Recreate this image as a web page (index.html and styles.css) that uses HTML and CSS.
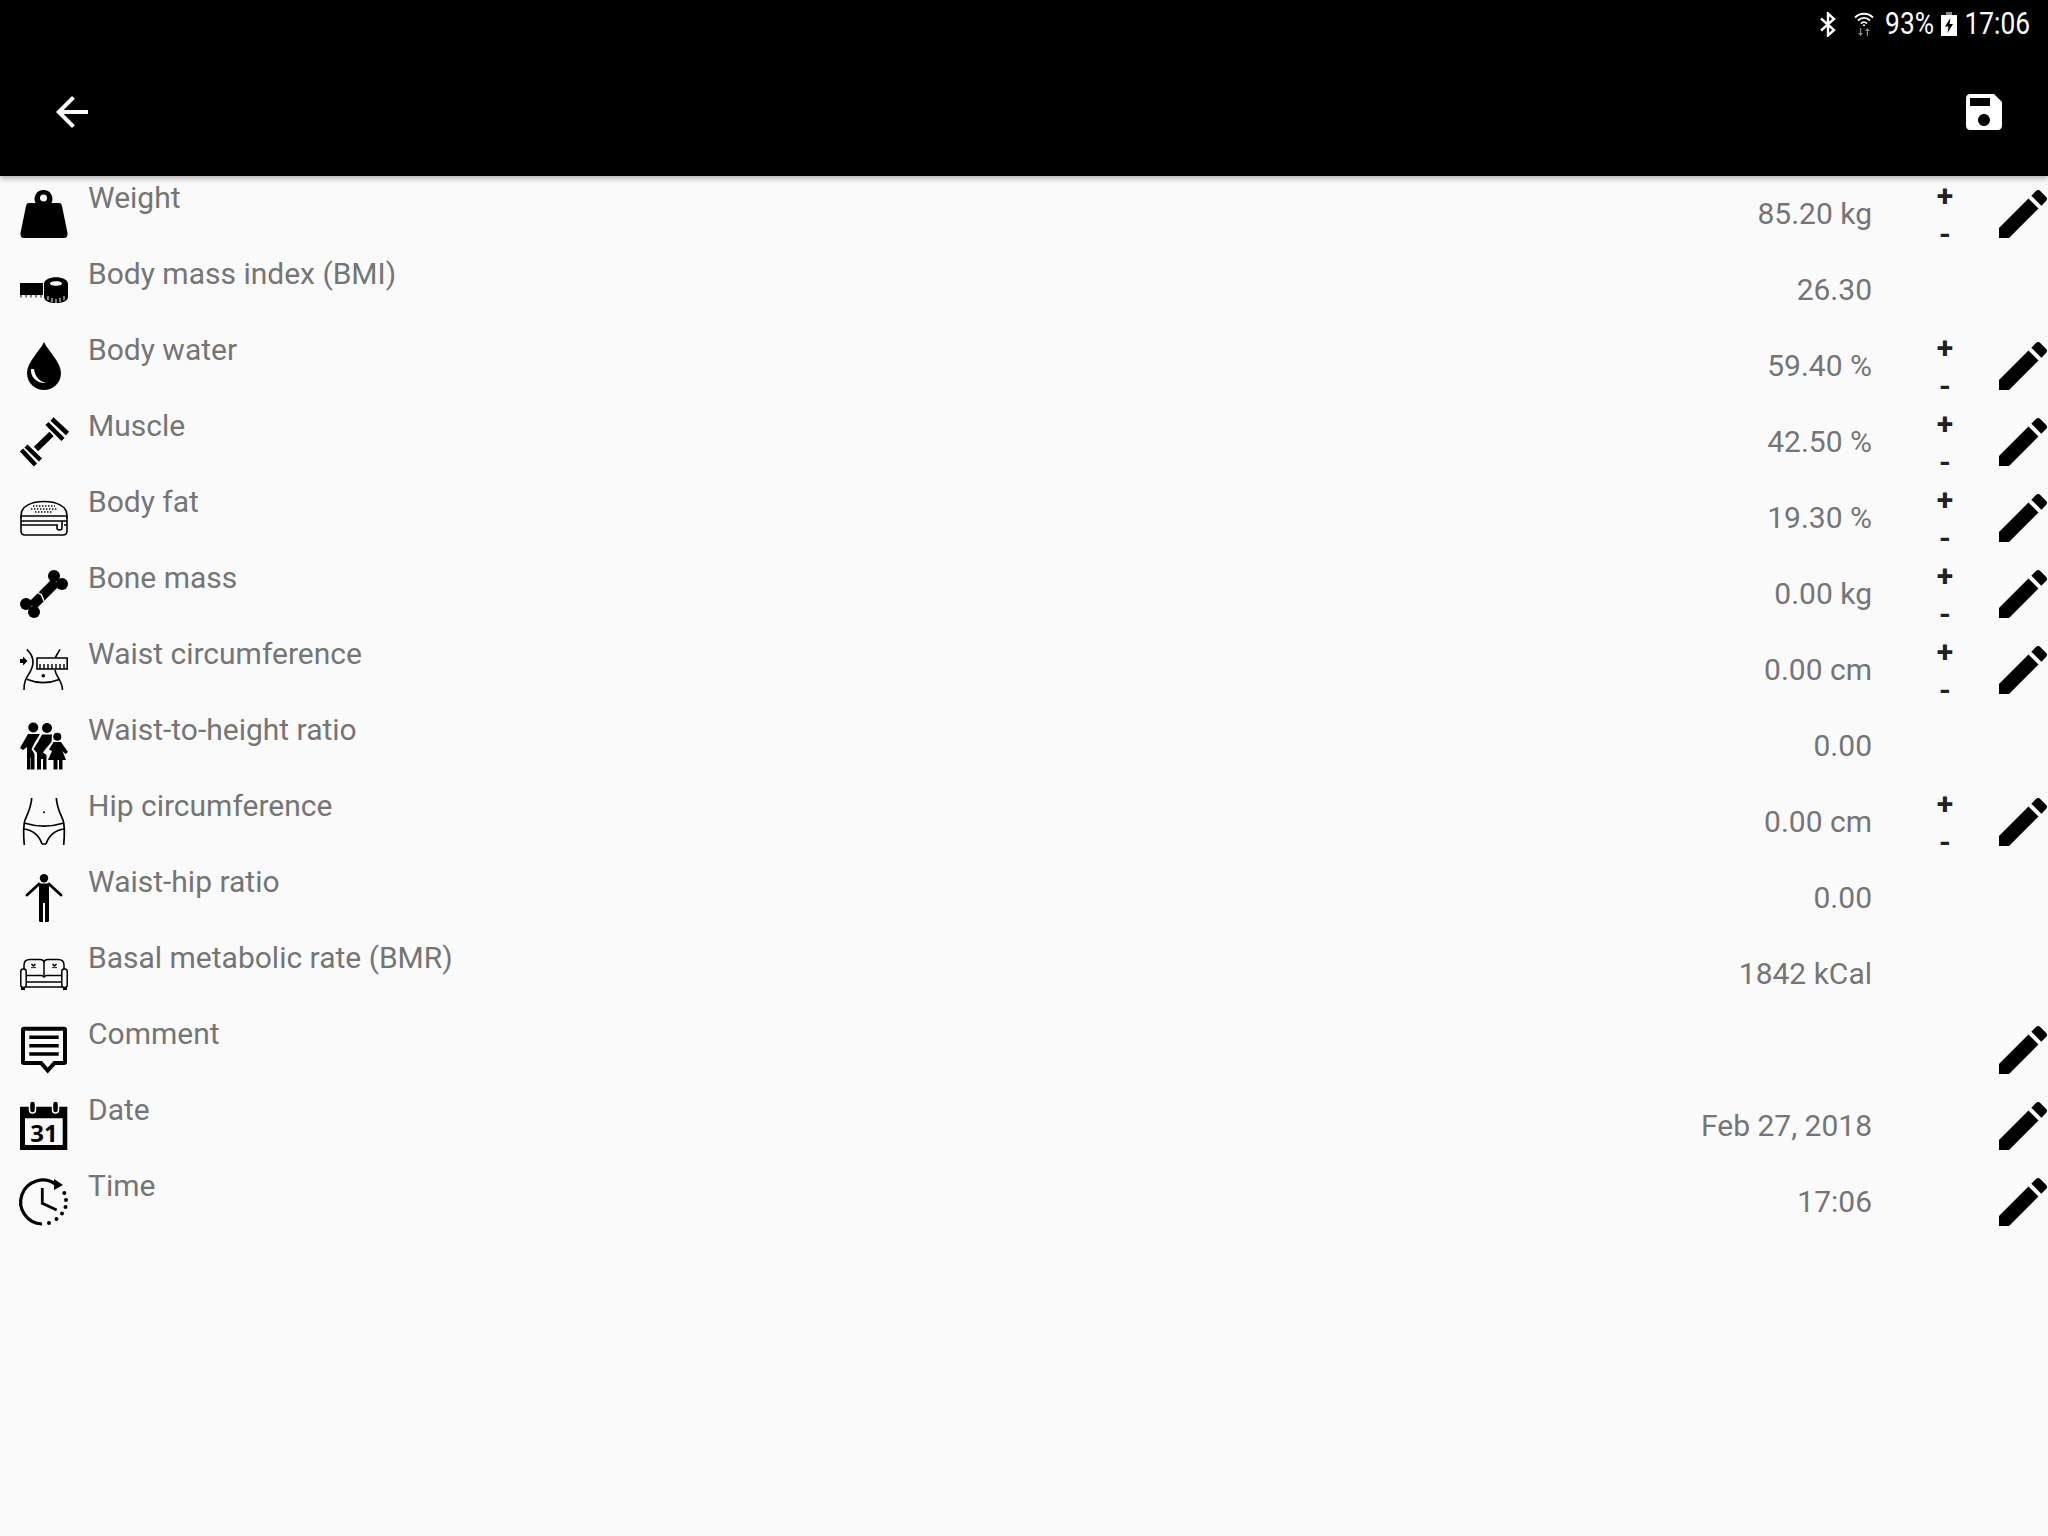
FILE: index.html
```html
<!DOCTYPE html>
<html>
  <head>
    <meta charset="utf-8" />
    <title>Edit measurement</title>
    <link rel="stylesheet" href="styles.css">
  </head>

  <body>
    <!-- shared pencil -->
    <svg class="sprites" width="0" height="0">
      <symbol id="pencil" viewBox="3 3 18 18">
        <path d="M3 17.25V21h3.75L17.81 9.94l-3.75-3.75L3 17.25zM20.71 7.04c.39-.39.39-1.02 0-1.41l-2.34-2.34c-.39-.39-1.02-.39-1.41 0l-1.83 1.83 3.75 3.75 1.83-1.83z"/>
      </symbol>
    </svg>

    <header class="appbar">
      <div class="status">
        <svg class="st-bt" viewBox="0 0 16 25" width="16" height="25">
          <path d="M1 6.5 L14 18 L8 23.5 V1.5 L14 7 L1 18.5" fill="none" stroke="#fff" stroke-width="2.4"/>
        </svg>
        <svg class="st-wifi" viewBox="0 0 20 24" width="20" height="24">
          <path d="M1 5.5 C6 0.5 14 0.5 19 5.5 M4 8.5 C7.5 5 12.5 5 16 8.5 M7 11.5 C8.8 9.8 11.2 9.8 13 11.5" fill="none" stroke="#fff" stroke-width="1.8"/>
          <path d="M10 12 L11.6 14 H8.4Z" fill="#fff"/>
          <path d="M6 16 V21 H4 L6.5 24 L9 21 H7.2 V16Z M14 24 V19 H16 L13.5 16 L11 19 H12.8 V24Z" fill="#8a8a8a"/>
        </svg>
        <span class="st-text st-pct">93%</span>
        <svg class="st-batt" viewBox="0 0 16 24" width="16" height="24">
          <path d="M5 0 H11 V3 H5Z" fill="#8a8a8a"/>
          <path d="M0 3 H16 V24 H0Z M9.5 6 L4 14.5 H7.5 L6.5 21 L12 12 H8.5Z" fill="#fff" fill-rule="evenodd"/>
        </svg>
        <span class="st-text st-time">17:06</span>
      </div>
      <div class="toolbar">
        <svg class="tool-icon" viewBox="0 0 24 24">
          <path d="M20 11H7.83l5.59-5.59L12 4l-8 8 8 8 1.41-1.41L7.83 13H20v-2z"/>
        </svg>
        <svg class="tool-icon" viewBox="0 0 24 24">
          <path d="M17 3H5c-1.11 0-2 .9-2 2v14c0 1.1.89 2 2 2h14c1.1 0 2-.9 2-2V7l-4-4zm-5 16c-1.66 0-3-1.34-3-3s1.34-3 3-3 3 1.34 3 3-1.34 3-3 3zm3-10H5V5h10v4z"/>
        </svg>
      </div>
    </header>

    <main class="list">
      <div class="row">
        <svg class="icon" viewBox="0 0 48 48">
          <path fill-rule="evenodd" d="M9 13 H15.5 A9 9 0 1 1 31.5 13 H39 Q41.5 13 42 16 L47.5 43 Q48 48 44 48 H4 Q0 48 .5 43 L6 16 Q6.5 13 9 13Z M23.5 4.500 A3.500 3.500 0 1 0 23.51 11.500 A3.500 3.500 0 1 0 23.5 4.500Z"/>
        </svg>
        <span class="label">Weight</span>
        <span class="value">85.20 kg</span>
        <div class="steppers"><span>+</span><span>-</span></div>
        <svg class="edit"><use href="#pencil"/></svg>
      </div>

      <div class="row">
        <svg class="icon" viewBox="0 0 48 48">
          <path d="M0 17 H23 V29 H21.500 V31.500 H20.500 V29 H16.500 V31.500 H15.500 V29 H11.500 V31.500 H10.500 V29 H6.500 V31.500 H5.500 V29 H1.500 V31.500 H.5 V29 H0Z"/>
          <path fill-rule="evenodd" d="M24 18 C24 9 48 9 48 18 V31 C48 39 24 39 24 31Z M30 17.500 C30 20.500 42 20.500 42 17.500 C42 14.500 30 14.500 30 17.500Z"/>
          <path d="M28 30 V34 M32 32 V36 M36 33 V37 M40 32 V36 M44 30 V34" stroke="#fafafa" stroke-width="1"/>
        </svg>
        <span class="label">Body mass index (BMI)</span>
        <span class="value">26.30</span>
        <div class="steppers"></div>
        <div class="edit"></div>
      </div>

      <div class="row">
        <svg class="icon" viewBox="0 0 48 48">
          <path d="M24 0 C28 9 41 20 41 31 C41 41 33 48 24 48 C15 48 7 41 7 31 C7 20 20 9 24 0Z"/>
          <path d="M11 27 C10 35 17 42 27 41 C20 40 15 35 14 27Z" fill="#fafafa"/>
        </svg>
        <span class="label">Body water</span>
        <span class="value">59.40 %</span>
        <div class="steppers"><span>+</span><span>-</span></div>
        <svg class="edit"><use href="#pencil"/></svg>
      </div>

      <div class="row">
        <svg class="icon" viewBox="0 0 48 48">
          <path d="M16 31 L31.500 16" stroke="#000" stroke-width="6" fill="none"/>
          <path d="M27 5.500 L43 21.500 M32 1 L47.500 15.500 M1.500 32 L15.500 47 M6 28 L20.500 42" stroke="#000" stroke-width="4.500" fill="none"/>
        </svg>
        <span class="label">Muscle</span>
        <span class="value">42.50 %</span>
        <div class="steppers"><span>+</span><span>-</span></div>
        <svg class="edit"><use href="#pencil"/></svg>
      </div>

      <div class="row">
        <svg class="icon" viewBox="0 0 48 48">
          <g fill="none" stroke="#000" stroke-width="1.600">
            <path d="M1 24 V21 C1 12 12 7.500 24 7.500 C36 7.500 47 12 47 21 V24"/>
            <path d="M1 22 H47 M1 27 H47 M1 31 H38 M44 31 H47"/>
            <path d="M1 22 V37 Q1 41 5 41 H43 Q47 41 47 37 V22"/>
            <path d="M37 31 V34 Q37 36 39.500 36 Q42 36 42 34 V27"/>
          </g>
          <path d="M13 12 H35 M11 15 H37 M15 18 H33" stroke="#000" stroke-width="1.400" stroke-dasharray="1.400 1.600" fill="none"/>
        </svg>
        <span class="label">Body fat</span>
        <span class="value">19.30 %</span>
        <div class="steppers"><span>+</span><span>-</span></div>
        <svg class="edit"><use href="#pencil"/></svg>
      </div>

      <div class="row">
        <svg class="icon" viewBox="0 0 48 48">
          <path d="M12 36 L36 12" stroke="#000" stroke-width="10" fill="none"/>
          <circle cx="34" cy="6" r="6"/>
          <circle cx="42" cy="14" r="6"/>
          <circle cx="6" cy="34" r="6"/>
          <circle cx="14" cy="42" r="6"/>
          <path d="M17 22 L21.500 25 L24 31" stroke="#fafafa" stroke-width="1.400" fill="none"/>
        </svg>
        <span class="label">Bone mass</span>
        <span class="value">0.00 kg</span>
        <div class="steppers"><span>+</span><span>-</span></div>
        <svg class="edit"><use href="#pencil"/></svg>
      </div>

      <div class="row">
        <svg class="icon" viewBox="0 0 48 48">
          <path d="M0 13 H3 V10.500 L7.500 15 L3 19.500 V17 H0Z"/>
          <circle cx="23.300" cy="29.700" r="1.800"/>
          <g fill="none" stroke="#000" stroke-width="1.600">
            <path d="M6.700 3.300 C13 9 15 17 10 26 C7 31 4 34 4 44"/>
            <path d="M40 3.300 L35 12 M35 24 C36 31 42.500 35 42.500 44"/>
            <path d="M6.700 33.300 Q23 40 40 33.300"/>
            <path d="M17 12 H47.200 V23 H17Z"/>
            <path d="M20 23 V18 M24 23 V18 M28 23 V18 M32 23 V18 M36 23 V18 M40 23 V18 M44 23 V18" stroke-width="1.400"/>
          </g>
        </svg>
        <span class="label">Waist circumference</span>
        <span class="value">0.00 cm</span>
        <div class="steppers"><span>+</span><span>-</span></div>
        <svg class="edit"><use href="#pencil"/></svg>
      </div>

      <div class="row">
        <svg class="icon" viewBox="0 0 48 48">
          <circle cx="13.300" cy="5.500" r="5"/>
          <circle cx="27" cy="6" r="5"/>
          <circle cx="37.300" cy="14.700" r="4"/>
          <path d="M8 12 H20 L15 20 L11.500 27 L14.500 32 V47.500 H10.500 V36 H10 V47.500 H7 V25 L3 28 L0 26 Z"/>
          <path d="M22 12.500 H32 L31.500 20 L25.500 27 L23 30.500 L26.500 33 V47.500 H23 V37 H21 V47.500 H17 V31 L13.500 27 L18 20Z"/>
          <path d="M33.500 20 H41 L48 30 L45.500 32 L42.500 29 L46 38 H42.500 V47.500 H39 V38 H37.500 V47.500 H33.500 V38 H28 L32 29 L29 27.500Z"/>
        </svg>
        <span class="label">Waist-to-height ratio</span>
        <span class="value">0.00</span>
        <div class="steppers"></div>
        <div class="edit"></div>
      </div>

      <div class="row">
        <svg class="icon" viewBox="0 0 48 48">
          <circle cx="24" cy="14.300" r="1"/>
          <g fill="none" stroke="#000" stroke-width="1.700">
            <path d="M11.700 0 C11 10 8 15 5 22 C3 28 3.500 38 4.300 47"/>
            <path d="M36.300 0 C37 10 40 15 43 22 C45 28 44.500 38 43.700 47"/>
            <path d="M5 25.300 Q24 31 43 25.300"/>
            <path d="M3.500 31 C12 32 19 37 22 46 M44.500 31 C36 32 29 37 26 46 M22 46 H26"/>
          </g>
        </svg>
        <span class="label">Hip circumference</span>
        <span class="value">0.00 cm</span>
        <div class="steppers"><span>+</span><span>-</span></div>
        <svg class="edit"><use href="#pencil"/></svg>
      </div>

      <div class="row">
        <svg class="icon" viewBox="0 0 48 48">
          <circle cx="24" cy="4.300" r="4.200"/>
          <path d="M19 9.500 H29 V47 Q29 48 27.500 48 H25 V29 H23 V48 H20.500 Q19 48 19 47Z"/>
          <path d="M7 21 L19 10 M41 21 L29 10" stroke="#000" stroke-width="2.800" stroke-linecap="round"/>
        </svg>
        <span class="label">Waist-hip ratio</span>
        <span class="value">0.00</span>
        <div class="steppers"></div>
        <div class="edit"></div>
      </div>

      <div class="row">
        <svg class="icon" viewBox="0 0 48 48">
          <g fill="none" stroke="#000" stroke-width="1.500">
            <path d="M4 19 V15 Q4 9.500 10 9.500 H20 Q24 9.500 24 13 V26 M24 13 Q24 9.500 28 9.500 H38 Q44 9.500 44 15 V19"/>
            <path d="M6 25.500 H22 L24 27 L26 25.500 H42"/>
            <path d="M6 32 H42 M6 37 H42"/>
            <rect x=".8" y="19" width="5.400" height="18.500" rx="2.500"/>
            <rect x="41.800" y="19" width="5.400" height="18.500" rx="2.500"/>
          </g>
          <path d="M1 37 H5 V40 H1Z M43 37 H47 V40 H43Z"/>
          <path d="M11.500 14 L15.500 18 M15.500 14 L11.500 18 M32.500 14 L36.500 18 M36.500 14 L32.500 18" stroke="#000" stroke-width="1.500"/>
        </svg>
        <span class="label">Basal metabolic rate (BMR)</span>
        <span class="value">1842 kCal</span>
        <div class="steppers"></div>
        <div class="edit"></div>
      </div>

      <div class="row">
        <svg class="icon" viewBox="0 0 48 48">
          <path d="M4 2.700 H44 Q45 2.700 45 4 V36 Q45 37 44 37 H34.500 L27.700 44.500 L21 37 H4 Q3 37 3 36 V4 Q3 2.700 4 2.700Z" fill="none" stroke="#000" stroke-width="4"/>
          <path d="M9.300 9.500 H38.700 V13 H9.300Z M9.300 18 H38.700 V21.500 H9.300Z M9.300 26.300 H38.700 V29.800 H9.300Z"/>
        </svg>
        <span class="label">Comment</span>
        <span class="value"></span>
        <div class="steppers"></div>
        <svg class="edit"><use href="#pencil"/></svg>
      </div>

      <div class="row">
        <svg class="icon" viewBox="0 0 48 48">
          <path fill-rule="evenodd" d="M0 4.700 H47.300 V48 H0Z M5 16.300 V43 H42.700 V16.300Z"/>
          <rect x="9.500" y="-1" width="6" height="12" rx="3" fill="#000" stroke="#fafafa" stroke-width="1.500"/>
          <rect x="32.500" y="-1" width="6" height="12" rx="3" fill="#000" stroke="#fafafa" stroke-width="1.500"/>
          <text class="cal-day" x="24" y="40" text-anchor="middle">31</text>
        </svg>
        <span class="label">Date</span>
        <span class="value">Feb 27, 2018</span>
        <div class="steppers"></div>
        <svg class="edit"><use href="#pencil"/></svg>
      </div>

      <div class="row">
        <svg class="icon" viewBox="0 0 48 48">
          <g fill="none" stroke="#000" stroke-width="3.200">
            <path d="M36 6.500 A22 22 0 1 0 22 46"/>
            <path d="M22.300 10 V25.300 L36.700 32" stroke-width="2.800"/>
          </g>
          <path d="M34 1 L43 7 L34 12Z"/>
          <circle cx="44.300" cy="15" r="2"/>
          <circle cx="46" cy="22" r="2"/>
          <circle cx="45.500" cy="29" r="2"/>
          <circle cx="42" cy="35.500" r="2"/>
          <circle cx="36.500" cy="41" r="2"/>
          <circle cx="29" cy="45" r="2"/>
        </svg>
        <span class="label">Time</span>
        <span class="value">17:06</span>
        <div class="steppers"></div>
        <svg class="edit"><use href="#pencil"/></svg>
      </div>
    </main>
  </body>
</html>
```

FILE: styles.css
```css
html {
  height: 100%;
}
body {
  margin: 0;
  min-height: 1536px;
  background-color: #fafafa;
  font-family: "Roboto", sans-serif;
  overflow: hidden;
}
.sprites {
  display: block;
  height: 0;
}

/* top bar */
.appbar {
  position: relative;
  background-color: #000000;
  height: 176px;
  box-shadow: 0 2px 6px rgba(0, 0, 0, 0.35);
}
.status {
  display: flex;
  justify-content: flex-end;
  align-items: center;
  height: 48px;
  padding-right: 18px;
  color: #ffffff;
}
.st-bt {
  margin-right: 18px;
}
.st-wifi {
  margin-right: 13px;
}
.st-batt {
  margin: 0 10px 0 7px;
}
.st-text {
  display: inline-block;
  font-size: 31px;
  line-height: 48px;
  transform-origin: right center;
  transform: scaleX(0.85);
}
.st-pct {
  width: 47px;
  white-space: nowrap;
  direction: rtl;
}
.st-time {
  width: 63px;
  white-space: nowrap;
  direction: rtl;
}
.toolbar {
  display: flex;
  justify-content: space-between;
  align-items: center;
  height: 128px;
  padding: 0 40px 0 48px;
}
.tool-icon {
  width: 48px;
  height: 48px;
  fill: #ffffff;
}

/* rows */
.row {
  display: flex;
  align-items: flex-start;
  height: 76px;
  padding: 0 1px 0 20px;
}
.icon {
  flex: none;
  width: 48px;
  height: 48px;
  margin-top: 14px;
  margin-right: 20px;
  overflow: visible;
}
.label {
  flex: 1;
  margin-top: 1px;
  font-size: 30px;
  line-height: 42px;
  color: #757575;
}
.value {
  margin-top: 17px;
  font-size: 30px;
  line-height: 42px;
  color: #757575;
  white-space: nowrap;
}
.steppers {
  flex: none;
  display: flex;
  flex-direction: column;
  align-items: center;
  width: 48px;
  margin-left: 49px;
  font-size: 30px;
  font-weight: 700;
  color: #212121;
}
.steppers span {
  height: 38px;
  line-height: 40px;
}
.edit {
  flex: none;
  width: 48px;
  height: 48px;
  margin-top: 14px;
  margin-left: 30px;
  fill: #000000;
}
.cal-day {
  font-family: "Open Sans", sans-serif;
  font-size: 24px;
  font-weight: 700;
}
```
